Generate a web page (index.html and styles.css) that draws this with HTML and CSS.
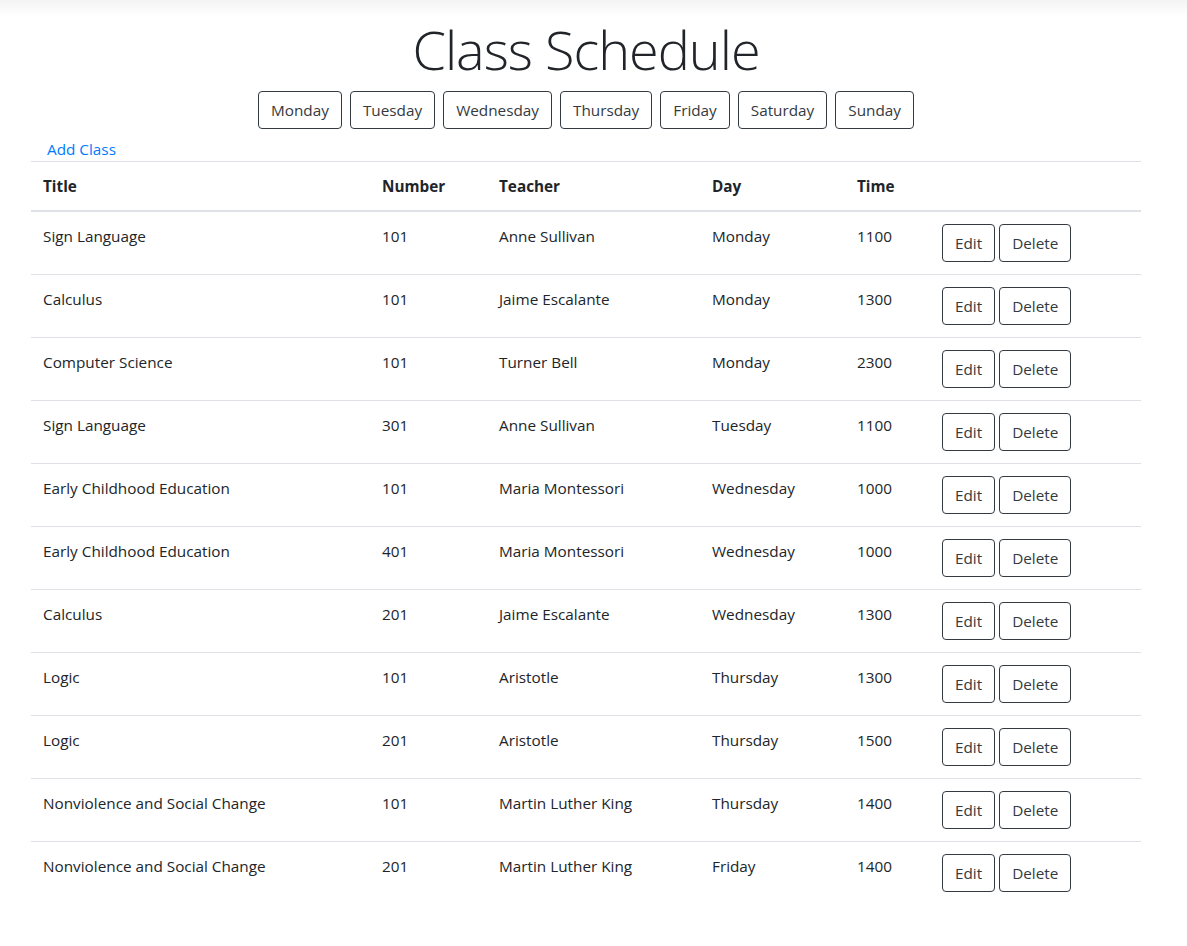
FILE: index.html
```html
<!DOCTYPE html>
<html lang="en">
<head>
<meta charset="utf-8">
<title>Class Schedule</title>
<link rel="stylesheet" href="styles.css">
</head>
<body>
<div class="topshade"></div>
<main class="container">
  <h1 class="title">Class Schedule</h1>
  <div class="days">
    <button class="btn">Monday</button>
    <button class="btn">Tuesday</button>
    <button class="btn">Wednesday</button>
    <button class="btn">Thursday</button>
    <button class="btn">Friday</button>
    <button class="btn">Saturday</button>
    <button class="btn">Sunday</button>
  </div>
  <div class="addrow"><a class="addlink" href="#">Add Class</a></div>
  <table class="table">
    <colgroup>
      <col class="c-title"><col class="c-num"><col class="c-teacher"><col class="c-day"><col class="c-time"><col class="c-act">
    </colgroup>
    <thead>
      <tr><th>Title</th><th>Number</th><th>Teacher</th><th>Day</th><th>Time</th><th></th></tr>
    </thead>
    <tbody>
      <tr><td>Sign Language</td><td>101</td><td>Anne Sullivan</td><td>Monday</td><td>1100</td><td><button class="btn">Edit</button> <button class="btn">Delete</button></td></tr>
      <tr><td>Calculus</td><td>101</td><td>Jaime Escalante</td><td>Monday</td><td>1300</td><td><button class="btn">Edit</button> <button class="btn">Delete</button></td></tr>
      <tr><td>Computer Science</td><td>101</td><td>Turner Bell</td><td>Monday</td><td>2300</td><td><button class="btn">Edit</button> <button class="btn">Delete</button></td></tr>
      <tr><td>Sign Language</td><td>301</td><td>Anne Sullivan</td><td>Tuesday</td><td>1100</td><td><button class="btn">Edit</button> <button class="btn">Delete</button></td></tr>
      <tr><td>Early Childhood Education</td><td>101</td><td>Maria Montessori</td><td>Wednesday</td><td>1000</td><td><button class="btn">Edit</button> <button class="btn">Delete</button></td></tr>
      <tr><td>Early Childhood Education</td><td>401</td><td>Maria Montessori</td><td>Wednesday</td><td>1000</td><td><button class="btn">Edit</button> <button class="btn">Delete</button></td></tr>
      <tr><td>Calculus</td><td>201</td><td>Jaime Escalante</td><td>Wednesday</td><td>1300</td><td><button class="btn">Edit</button> <button class="btn">Delete</button></td></tr>
      <tr><td>Logic</td><td>101</td><td>Aristotle</td><td>Thursday</td><td>1300</td><td><button class="btn">Edit</button> <button class="btn">Delete</button></td></tr>
      <tr><td>Logic</td><td>201</td><td>Aristotle</td><td>Thursday</td><td>1500</td><td><button class="btn">Edit</button> <button class="btn">Delete</button></td></tr>
      <tr><td>Nonviolence and Social Change</td><td>101</td><td>Martin Luther King</td><td>Thursday</td><td>1400</td><td><button class="btn">Edit</button> <button class="btn">Delete</button></td></tr>
      <tr><td>Nonviolence and Social Change</td><td>201</td><td>Martin Luther King</td><td>Friday</td><td>1400</td><td><button class="btn">Edit</button> <button class="btn">Delete</button></td></tr>
    </tbody>
  </table>
</main>
</body>
</html>
```

FILE: styles.css
```css
* { box-sizing: border-box; }
html, body { margin: 0; padding: 0; background: #fff; }
body {
  font-family: "Open Sans", "Noto Sans", sans-serif;
  font-size: 15.3px;
  line-height: 24px;
  color: #212529;
}
.topshade {
  height: 16px;
  background: linear-gradient(#f3f3f3, #ffffff);
}
.container {
  width: 1110px;
  margin-left: 31px;
}
.title {
  margin: 0 0 8px;
  font-size: 54px;
  font-weight: 300;
  line-height: 67px;
  text-align: center;
  letter-spacing: -1px;
  color: #212529;
}
.days {
  display: flex;
  justify-content: center;
  gap: 8px;
}
.btn {
  font-family: inherit;
  font-size: 15.3px;
  line-height: 24px;
  padding: 6px 12px;
  height: 38px;
  color: #343a40;
  background: #fff;
  border: 1px solid #343a40;
  border-radius: 4px;
  cursor: pointer;
}
.addrow {
  margin-top: 8px;
  padding-left: 16px;
  height: 24px;
}
.addlink {
  color: #007bff;
  text-decoration: none;
}
.table {
  width: 1110px;
  border-collapse: collapse;
  table-layout: fixed;
}
.c-title { width: 339px; }
.c-num { width: 117px; }
.c-teacher { width: 213px; }
.c-day { width: 145px; }
.c-time { width: 85px; }
.c-act { width: 211px; }
.table th, .table td {
  padding: 12px;
  text-align: left;
  vertical-align: top;
  border-top: 1px solid #dee2e6;
}
.table th {
  font-weight: 700;
  border-bottom: 2px solid #dee2e6;
}
.table thead + tbody tr:first-child td { border-top: 0; }
.table td:last-child { white-space: nowrap; }
```
